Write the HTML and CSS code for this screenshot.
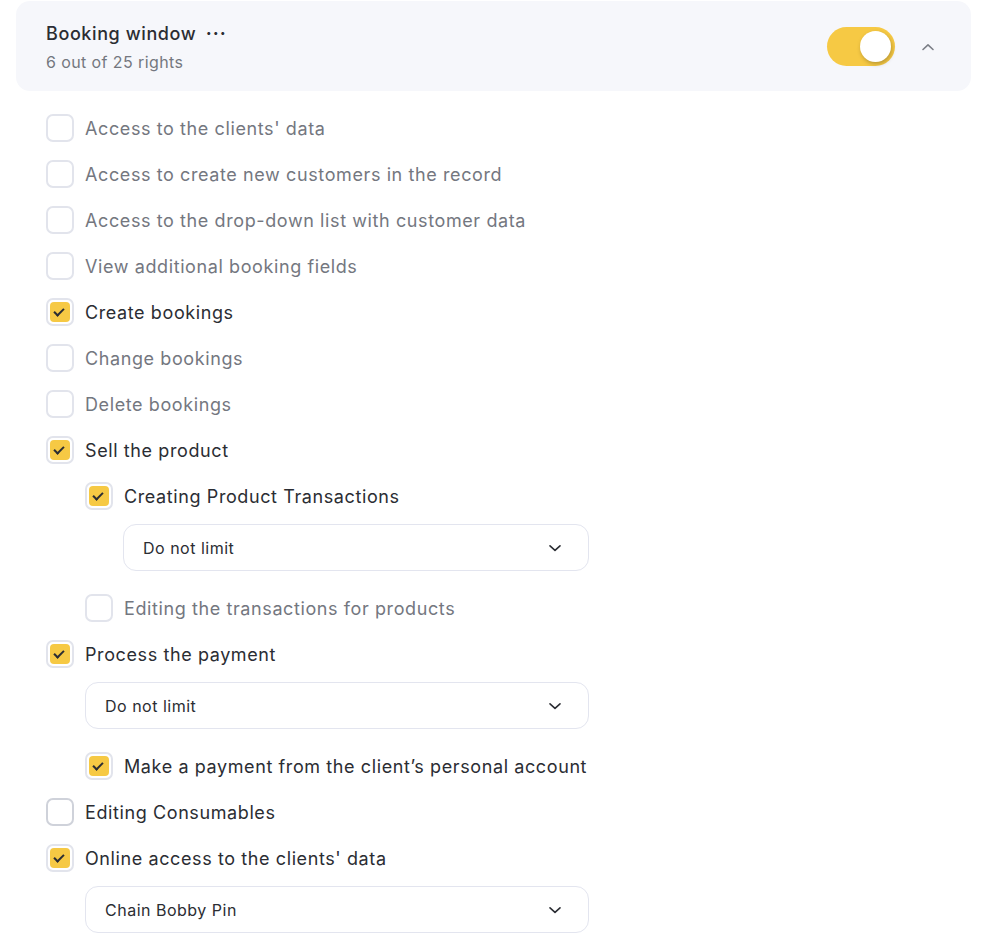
FILE: index.html
```html
<!DOCTYPE html>
<html lang="en">
<head>
<meta charset="UTF-8" />
<meta name="viewport" content="width=device-width, initial-scale=1" />
<title>Booking window rights</title>
<link rel="stylesheet" href="styles.css">
</head>
<body>
  <section class="group">
    <header class="group-head">
      <div class="group-info">
        <h2 class="group-title">Booking window <span class="more">&middot;&middot;&middot;</span></h2>
        <p class="group-count">6 out of 25 rights</p>
      </div>
      <div class="group-actions">
        <span class="toggle on"><span class="knob"></span></span>
        <svg class="chev-up" width="14" height="8" viewBox="0 0 14 8"><path d="M2 6.5 L7 1.8 L12 6.5" fill="none" stroke="#7b7e86" stroke-width="1.6" stroke-linecap="round" stroke-linejoin="round"/></svg>
      </div>
    </header>

    <ul class="rights">
      <li class="right"><span class="box"></span>Access to the clients' data</li>
      <li class="right"><span class="box"></span>Access to create new customers in the record</li>
      <li class="right"><span class="box"></span>Access to the drop-down list with customer data</li>
      <li class="right"><span class="box"></span>View additional booking fields</li>
      <li class="right checked"><span class="box"></span>Create bookings</li>
      <li class="right"><span class="box"></span>Change bookings</li>
      <li class="right"><span class="box"></span>Delete bookings</li>
      <li class="right checked"><span class="box"></span>Sell the product</li>
      <li class="nested">
        <div class="right checked"><span class="box"></span>Creating Product Transactions</div>
        <div class="select nested-select">Do not limit <svg width="14" height="8" viewBox="0 0 14 8"><path d="M2 1.8 L7 6.3 L12 1.8" fill="none" stroke="#2b2d33" stroke-width="1.6" stroke-linecap="round" stroke-linejoin="round"/></svg></div>
        <div class="right"><span class="box"></span>Editing the transactions for products</div>
      </li>
      <li class="right checked"><span class="box"></span>Process the payment</li>
      <li class="nested">
        <div class="select">Do not limit <svg width="14" height="8" viewBox="0 0 14 8"><path d="M2 1.8 L7 6.3 L12 1.8" fill="none" stroke="#2b2d33" stroke-width="1.6" stroke-linecap="round" stroke-linejoin="round"/></svg></div>
        <div class="right checked sub"><span class="box"></span>Make a payment from the client’s personal account</div>
      </li>
      <li class="right hover"><span class="box"></span>Editing Consumables</li>
      <li class="right checked"><span class="box"></span>Online access to the clients' data</li>
      <li class="nested">
        <div class="select">Chain Bobby Pin <svg width="14" height="8" viewBox="0 0 14 8"><path d="M2 1.8 L7 6.3 L12 1.8" fill="none" stroke="#2b2d33" stroke-width="1.6" stroke-linecap="round" stroke-linejoin="round"/></svg></div>
      </li>
    </ul>
  </section>
</body>
</html>
```

FILE: styles.css
```css
:root {
  --yellow: #f6c944;
  --card-bg: #f6f7fb;
  --text-dark: #2b2d33;
  --text-muted: #74777f;
  --box-border: #e2e4ec;
}
body {
  margin: 0;
  padding: 1px 29px 0 16px;
  font-family: Inter, 'Noto Sans', sans-serif;
  color: var(--text-dark);
  background: #fff;
}
.group-head {
  background: var(--card-bg);
  border-radius: 14px;
  height: 90px;
  box-sizing: border-box;
  padding: 20px 30px 0 30px;
  display: flex;
  justify-content: space-between;
  align-items: flex-start;
}
.group-title {
  margin: 0;
  font-size: 18px;
  font-weight: 500;
  line-height: 26px;
  letter-spacing: 0.6px;
}
.more {
  font-weight: 700;
  letter-spacing: 1px;
  margin-left: 4px;
}
.group-count {
  margin: 5px 0 0;
  font-size: 16px;
  color: var(--text-muted);
  line-height: 20px;
  letter-spacing: 0.4px;
}
.group-actions {
  display: flex;
  align-items: center;
  gap: 26px;
  padding-top: 6px;
  margin-right: 6px;
}
.toggle {
  width: 68px;
  height: 39px;
  border-radius: 20px;
  background: var(--yellow);
  display: flex;
  align-items: center;
  justify-content: flex-end;
  padding: 0 4px;
  box-sizing: border-box;
}
.knob {
  width: 31px;
  height: 31px;
  border-radius: 50%;
  background: #fff;
  box-shadow: 1px 2px 4px rgb(0 0 0 / 0.25);
}
.rights {
  list-style: none;
  margin: 14px 0 0;
  padding: 0 0 0 30px;
}
.right {
  display: flex;
  align-items: center;
  height: 46px;
  font-size: 18px;
  letter-spacing: 0.6px;
  color: var(--text-muted);
}
.right.checked, .right.hover {
  color: var(--text-dark);
}
.box {
  width: 28px;
  height: 28px;
  box-sizing: border-box;
  border: 2px solid var(--box-border);
  border-radius: 7px;
  background: #fff;
  margin-right: 11px;
  flex: none;
  position: relative;
}
.right.hover .box {
  border-color: #cfd2da;
}
.checked .box::before {
  content: "";
  position: absolute;
  inset: 2px;
  border-radius: 4px;
  background: var(--yellow);
}
.checked .box::after {
  content: "";
  position: absolute;
  left: 8px;
  top: 6px;
  width: 4px;
  height: 8px;
  border: solid #2b2d33;
  border-width: 0 2px 2px 0;
  transform: rotate(45deg);
}
.nested {
  padding-left: 39px;
}
.select {
  height: 47px;
  box-sizing: border-box;
  border: 1px solid #e3e5ef;
  border-radius: 13px;
  display: flex;
  align-items: center;
  justify-content: space-between;
  padding: 0 26px 0 19px;
  font-size: 16px;
  letter-spacing: 0.5px;
  color: var(--text-dark);
  width: 504px;
  margin: 5px 0 14px;
}
.nested-select {
  margin-left: 38px;
  width: 466px;
}
```
